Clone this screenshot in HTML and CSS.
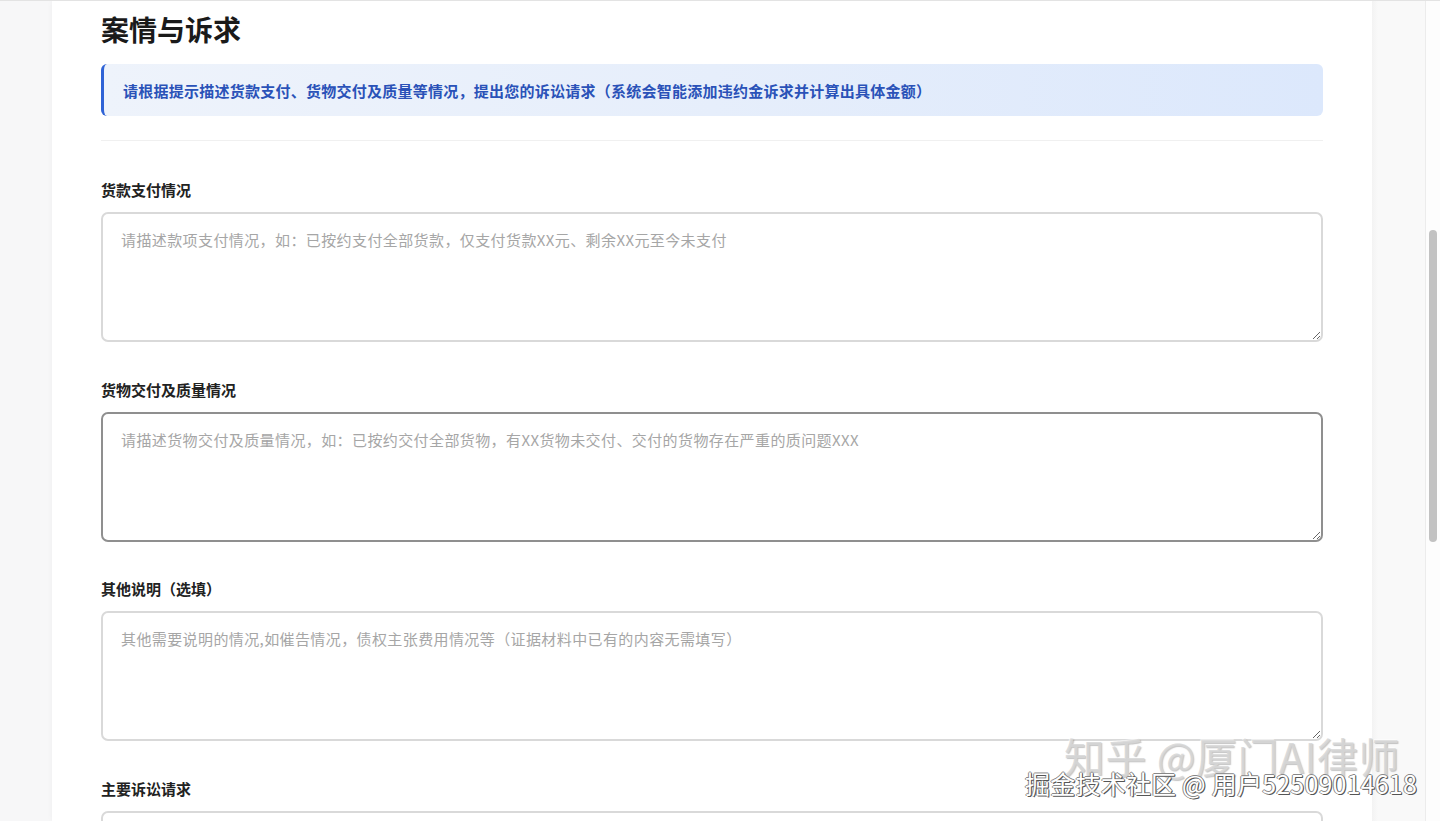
FILE: index.html
```html
<!DOCTYPE html>
<html lang="zh-CN">
<head>
<meta charset="utf-8">
<title>案情与诉求</title>
<link rel="stylesheet" href="styles.css">
</head>
<body>
<div class="app">
  <div class="gutter gutter-left"></div>
  <main class="card">
    <div class="content">
      <h1 class="title">案情与诉求</h1>
      <div class="notice">请根据提示描述货款支付、货物交付及质量等情况，提出您的诉讼请求（系统会智能添加违约金诉求并计算出具体金额）</div>
      <div class="divider"></div>
      <div class="field">
        <label class="field-label">货款支付情况</label>
        <textarea class="field-input" placeholder="请描述款项支付情况，如：已按约支付全部货款，仅支付货款XX元、剩余XX元至今未支付"></textarea>
      </div>
      <div class="field">
        <label class="field-label">货物交付及质量情况</label>
        <textarea class="field-input is-hover" placeholder="请描述货物交付及质量情况，如：已按约交付全部货物，有XX货物未交付、交付的货物存在严重的质问题XXX"></textarea>
      </div>
      <div class="field">
        <label class="field-label">其他说明（选填）</label>
        <textarea class="field-input" placeholder="其他需要说明的情况,如催告情况，债权主张费用情况等（证据材料中已有的内容无需填写）"></textarea>
      </div>
      <div class="field">
        <label class="field-label">主要诉讼请求</label>
        <textarea class="field-input" placeholder=""></textarea>
      </div>
    </div>
  </main>
  <div class="gutter gutter-right"></div>
  <div class="scrollbar"><div class="scroll-thumb"></div></div>
</div>
<div class="watermark">
  <div class="wm-zhihu">知乎 @厦门AI律师</div>
  <div class="wm-juejin">掘金技术社区 @ 用户52509014618</div>
</div>
</body>
</html>
```
FILE: styles.css
```css
* { box-sizing: border-box; }
html, body { margin: 0; padding: 0; }
body {
  font-family: "Noto Sans CJK SC", "Noto Sans", sans-serif;
  background: #f7f7f8;
  color: #1f1f1f;
  overflow: hidden;
}
.app {
  display: flex;
  height: 821px;
  overflow: hidden;
  border-top: 1px solid #e3e3e3;
}
.gutter-left {
  width: 52px;
  flex: none;
  background: #f7f7f8;
}
.gutter-right {
  width: 53px;
  flex: none;
  background: linear-gradient(90deg, #f3f3f3 0, #f9f9f9 6px, #f9f9f9 100%);
}
.card {
  width: 1320px;
  flex: none;
  background: #fff;
  box-shadow: 0 0 6px rgba(0,0,0,0.04);
  overflow: hidden;
}
.content {
  padding: 10px 49px 0;
}
.title {
  margin: 0;
  font-size: 28px;
  line-height: 36px;
  font-weight: 700;
  color: #1a1a1a;
}
.notice {
  margin-top: 17px;
  height: 52px;
  display: flex;
  align-items: center;
  padding-left: 19px;
  border-left: 3px solid #2f63d6;
  border-radius: 6px;
  background: linear-gradient(90deg, #eef3fb 0%, #e6eefb 50%, #dce8fc 100%);
  color: #2a52b8;
  font-size: 15px;
  font-weight: 700;
  letter-spacing: 0.25px;
}
.divider {
  margin-top: 24px;
  height: 1px;
  background: #f0f0f0;
}
.field {
  margin-top: 39px;
  display: flex;
  flex-direction: column;
}
.field + .field { margin-top: 37.5px; }
.field-label {
  font-size: 15px;
  line-height: 20px;
  font-weight: 600;
  color: #222;
  margin-bottom: 12px;
}
.field-input {
  display: block;
  width: 100%;
  height: 130px;
  border: 2px solid #d9d9d9;
  border-radius: 7px;
  padding: 15px 18px;
  font-family: "Noto Sans CJK SC", "Noto Sans", sans-serif;
  font-size: 15px;
  line-height: 22px;
  letter-spacing: 0.4px;
  color: #333;
  background: #fff;
  outline: none;
}
.field-input.is-hover { border-color: #8f8f8f; }
.field-input::placeholder { color: #a6a6a6; }
.scrollbar {
  width: 15px;
  flex: none;
  background: #fdfdfd;
  border-left: 1px solid #ececec;
  padding: 229px 2px 0 3px;
}
.scroll-thumb {
  width: 8px;
  height: 312px;
  border-radius: 4px;
  background: #c2c2c2;
}
.watermark {
  position: absolute;
  right: 23px;
  bottom: 23px;
  display: flex;
  flex-direction: column;
  align-items: flex-end;
  pointer-events: none;
}
.wm-zhihu {
  font-family: "Noto Sans CJK SC", sans-serif;
  font-size: 41px;
  line-height: 42px;
  color: rgba(215,215,215,0.85);
  text-shadow: 1px 1px 1px rgba(90,90,90,0.35), -1px -1px 0 rgba(255,255,255,0.6);
  margin-right: 17px;
  letter-spacing: 0.5px;
}
.wm-juejin {
  margin-top: -8px;
  font-family: "Noto Sans CJK SC", sans-serif;
  font-size: 25px;
  line-height: 30px;
  color: #ffffff;
  text-shadow: 1px 1px 0 #555, -1px 0 0 #888, 0 -1px 0 #888, 1px 0 0 #777;
  letter-spacing: 0.2px;
}
```
